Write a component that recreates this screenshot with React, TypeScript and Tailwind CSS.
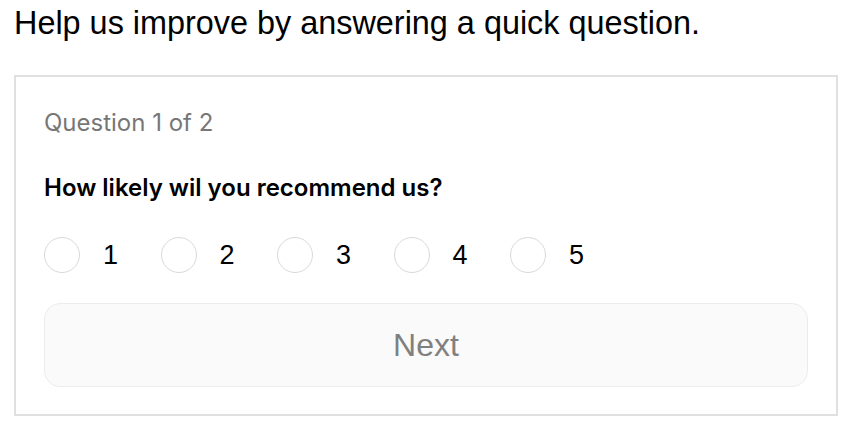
export default function App() {
  const opts = [1, 2, 3, 4, 5];
  return (
    <div className="w-[856px] h-[430px] bg-white" style={{ fontFamily: "'Liberation Sans', Arial, sans-serif" }}>
      <div className="px-[14px] pt-[5px]">
        <h1 className="text-[32.4px] leading-[36px] text-black">Help us improve by answering a quick question.</h1>
        <div className="mt-[34px] w-[824px] border-2 border-[#e0e0e0] px-[28px] pt-[31px] pb-[27px]">
          <div className="text-[24px] leading-[30px] text-[#777]" style={{ fontFamily: "Inter, 'Liberation Sans', sans-serif" }}>Question 1 of 2</div>
          <div className="mt-[35px] text-[24px] leading-[30px] font-semibold text-black" style={{ fontFamily: "Inter, 'Liberation Sans', sans-serif" }}>How likely wil you recommend us?</div>
          <div className="mt-[34px] flex items-center">
            {opts.map((n) => (
              <label key={n} className="flex items-center w-[116.5px]">
                <span className="w-[36px] h-[36px] rounded-full border border-[#d9d9d9] bg-white" />
                <span className="ml-[23px] text-[27px] leading-[36px] text-black">{n}</span>
              </label>
            ))}
          </div>
          <button className="mt-[30px] w-full h-[84px] rounded-[16px] border border-[#ececec] bg-[#fafafa] text-[32px] text-[#808080]">Next</button>
        </div>
      </div>
    </div>
  );
}
